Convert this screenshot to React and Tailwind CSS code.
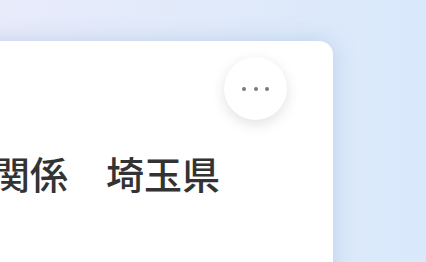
import React from "react";

export default function App() {
  return (
    <div
      className="w-[426px] h-[262px] overflow-hidden bg-gradient-to-r from-[#e8ebfa] to-[#d9e9fb]"
      style={{ fontFamily: '"Noto Sans CJK JP", "Noto Sans", sans-serif' }}
    >
      <div className="pt-[41px]">
        {/* Card */}
        <div className="ml-[-60px] w-[393px] h-[260px] bg-white rounded-tr-[14px] shadow-[0_0_22px_rgba(140,170,215,0.4)]">
          <div className="flex justify-end pt-[16px] pr-[46px]">
            <button className="w-[63px] h-[63px] rounded-full bg-white shadow-[0_4px_14px_rgba(0,0,0,0.12)] flex items-center justify-center gap-[7.5px]">
              <span className="w-[4px] h-[4px] rounded-full bg-[#7a7a7a]"></span>
              <span className="w-[4px] h-[4px] rounded-full bg-[#7a7a7a]"></span>
              <span className="w-[4px] h-[4px] rounded-full bg-[#7a7a7a]"></span>
            </button>
          </div>
          <p className="mt-[34px] pl-[52px] text-[38px] leading-none font-medium text-[#333333] whitespace-nowrap">
            関係　埼玉県
          </p>
        </div>
      </div>
    </div>
  );
}
